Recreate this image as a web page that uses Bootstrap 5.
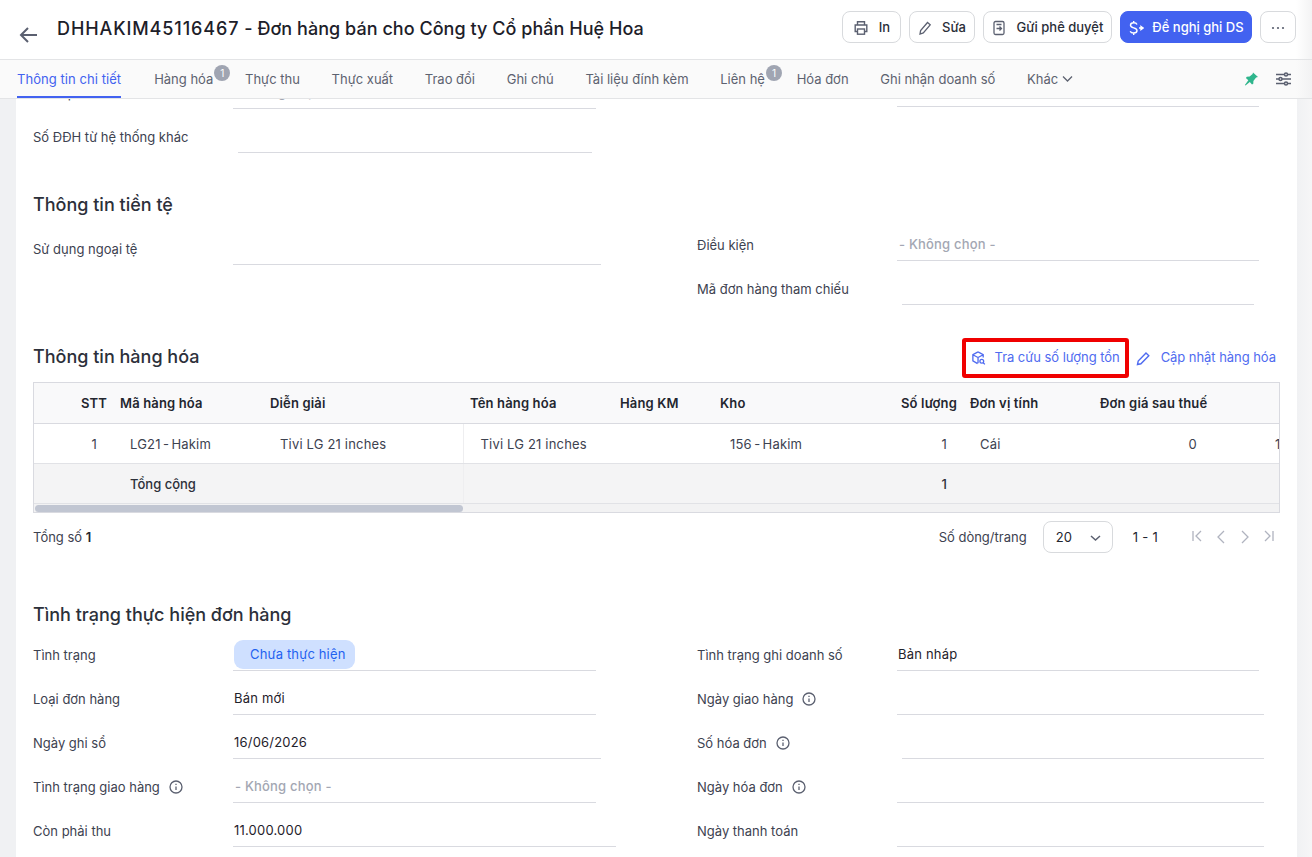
<!DOCTYPE html>
<html lang="en">
<head>
    <meta charset="UTF-8">
    <meta name="viewport" content="width=device-width, initial-scale=1.0">
    <title>Đơn hàng bán</title>
    <link href="https://cdn.jsdelivr.net/npm/bootstrap@5.3.0/dist/css/bootstrap.min.css" rel="stylesheet">
    <style>
        html, body { height: 100%; overflow: hidden; }
        body { font-family: Inter, "Noto Sans", sans-serif; font-size: 13px; color: #3d4250; background: #fff; }
        svg { display: block; flex: none; }

        .app-shell { width: 1312px; height: 857px; display: flex; flex-direction: column; }
        .page-head { height: 60px; background: linear-gradient(to right, #fff 1296px, #f3f3f4 1312px); border-bottom: 1px solid #e3e4e6; padding: 11px 16px 0 19px; flex: none; }
        .page-title { font-size: 18px; font-weight: 500; letter-spacing: .04px; color: #1d2029; margin: 1px 0 0 18px; white-space: pre; line-height: 34px; }
        .title-code { letter-spacing: .9px; }
        .back-btn { margin-top: 14px; }
        .head-btn { height: 32px; padding: 2px 0 0; border: 1px solid #d8dadd; border-radius: 8px; background: #fff; color: #2a2e38; font-size: 13px; font-weight: 500; display: flex; align-items: center; justify-content: center; gap: 10px; }
        .head-btn-primary { background: #4262f0; border-color: #4262f0; color: #fff; gap: 8px; }
        .btn-w59 { width: 59px; }
        .btn-w66 { width: 66px; }
        .btn-w129 { width: 129px; gap: 11px; }
        .btn-w132 { width: 132px; }
        .btn-w36 { width: 36px; }

        .tabs-bar { height: 39px; background: linear-gradient(to right, #fafafa 1296px, #f2f2f3 1312px); border-bottom: 1px solid #e3e4e6; flex: none; padding: 0 21px 0 17px; display: flex; align-items: stretch; position: relative; z-index: 2; }
        .tab-item { color: #5d6270; padding-top: 10px; margin-right: 31.7px; white-space: nowrap; position: relative; }
        .tab-active { color: #4262f0; border-bottom: 2px solid #4262f0; margin-right: 33px; letter-spacing: .06px; }
        .tab-count { position: absolute; top: 5px; right: -17px; width: 16px; height: 16px; border-radius: 50%; background: #a0a5b2; color: #fff; font-size: 10px; line-height: 16px; text-align: center; }
        .tab-tools { display: flex; gap: 17px; margin-left: auto; padding-top: 11px; }

        .page-body { flex: 1; min-height: 0; display: flex; background: linear-gradient(to right, #f0f1f3 1296px, #f6f6f7 1312px); padding: 0 15px 0 16px; }
        .content-card { background: #fff; flex: 1; overflow: hidden; padding: 0 16px 0 17px; }
        .clip-row { margin-top: -34px; }
        .clip-right { margin-top: -2px; }
        .field-row { height: 44px; display: flex; align-items: flex-start; }
        .field-label { width: 200px; flex: none; padding-top: 18px; line-height: 20px; display: flex; align-items: center; gap: 9px; white-space: nowrap; }
        .field-val { height: 44px; border-bottom: 1px solid #d9dae0; color: #1f222b; letter-spacing: .2px; line-height: 20px; padding-top: 17px; padding-left: 1px; flex: none; }
        .field-muted { color: #a3a7b3; font-weight: 500; padding-left: 2px; }
        .field-badge { padding-top: 13px; }
        .status-chip { display: inline-block; height: 29px; line-height: 29px; padding: 0 10px 0 16px; border-radius: 9px; background: #cfe0ff; color: #1f62f0; letter-spacing: .15px; }
        .w-363 { width: 363px; }
        .w-368 { width: 368px; }
        .w-383 { width: 383px; }
        .w-354 { width: 354px; margin-left: 5px; }
        .w-352 { width: 352px; margin-left: 5px; }
        .w-362 { width: 362px; }
        .w-362s { width: 362px; margin-left: 5px; }
        .w-367 { width: 367px; }
        .col-left { width: 664px; flex: none; }
        .col-right { flex: 1; }
        .col-left-low { padding-top: 4px; }

        .sec-title { font-size: 18px; font-weight: 500; color: #2c303a; line-height: 24px; margin: 0; }
        .sec-money { margin-top: 40px; }
        .sec-status { margin-top: 50px; }
        .sec-goods { margin-top: -2px; }
        .goods-head { margin-top: 33px; margin-bottom: 4px; height: 40px; }
        .goods-actions { display: flex; align-items: center; gap: 7px; }
        .goods-link { color: #4f6bf0; text-decoration: none; display: flex; align-items: center; gap: 9px; white-space: nowrap; letter-spacing: -.05px; }
        .goods-link-box { border: 4px solid #f00000; border-radius: 3px; height: 40px; padding: 0 5px; }
        .goods-link-edit { gap: 10px; margin-right: 5px; }

        .goods-wrap { width: 1247px; border: 1px solid #d9dae0; overflow: hidden; height: 131px; }
        .goods-table { table-layout: fixed; width: 1330px; border-collapse: collapse; margin: 0; }
        .gc-1 { width: 79px; }
        .gc-2 { width: 150px; }
        .gc-3 { width: 200px; }
        .gc-4 { width: 150px; }
        .gc-5 { width: 100px; }
        .gc-6 { width: 150px; }
        .gc-7 { width: 100px; }
        .gc-8 { width: 130px; }
        .gc-9 { width: 120px; }
        .gc-10 { width: 151px; }
        .goods-table th { height: 40px; padding: 1px 6px 0 7px; background: #f9f9fa; font-weight: 600; letter-spacing: .15px; color: #23262f; border-bottom: 1px solid #d9dae0; white-space: nowrap; }
        .goods-table td { height: 40px; padding: 4px 16px 0 17px; border-bottom: 1px solid #e1e2e6; color: #3d4250; letter-spacing: .18px; white-space: nowrap; }
        .goods-table .sum-row td { background: #f4f4f5; color: #2c303a; font-weight: 500; letter-spacing: 0; }
        .goods-table .cell-split { border-left: 1px solid #eeeef0; }
        .goods-table .cell-code { word-spacing: -1.5px; }
        .goods-table .cell-cut { padding-left: 62px; padding-right: 0; }
        .goods-track { height: 9px; background: #f2f2f3; padding-top: 1px; }
        .goods-thumb { width: 428px; height: 7px; margin-left: 1px; border-radius: 4px; background: #c1c6d2; }

        .pager-row { height: 32px; margin-top: 8px; }
        .pager-text { padding-top: 1px; }
        .pager-select { width: 70px; height: 32px; margin: 0 20px 0 16px; border: 1px solid #d8dadd; border-radius: 8px; padding: 1px 11px 0 12px; color: #23262f; display: flex; align-items: center; justify-content: space-between; letter-spacing: .3px; }
        .pager-range { color: #23262f; letter-spacing: .3px; margin-right: 27px; padding-top: 1px; }
        .pager-icons { display: flex; gap: 14px; margin-right: 7px; margin-left: 7px; }
        .total-strong { font-weight: 600; color: #23262f; }
    </style>
</head>
<body>
    <div class="app-shell">
        <!-- header -->
        <div class="page-head d-flex align-items-start">
            <svg class="back-btn" width="20" height="20" viewBox="0 0 20 20" fill="none" stroke="#5b6070" stroke-width="2"><path d="M18 10H2M9 3l-7 7 7 7"/></svg>
            <h1 class="page-title"><span class="title-code">DHHAKIM45116467</span> - Đơn hàng bán cho Công ty Cổ phần Huệ Hoa</h1>
            <div class="d-flex gap-2 ms-auto">
                <button class="head-btn btn-w59"><svg width="16" height="16" viewBox="0 0 16 16" fill="none" stroke="#5b6070" stroke-width="1.400"><path d="M4.500 5V1.800h7V5M4.500 11.500H2.200V5h11.600v6.500h-2.300"/><rect x="4.500" y="9" width="7" height="5.200"/></svg>In</button>
                <button class="head-btn btn-w66"><svg width="14" height="16" viewBox="0 0 14 16" fill="none" stroke="#5b6070" stroke-width="1.300"><path d="M2 14l.6-3.400L9.500 2.500l2.700 2.300-6.900 8.100z"/></svg>Sửa</button>
                <button class="head-btn btn-w129"><svg width="14" height="16" viewBox="0 0 14 16" fill="none" stroke="#5b6070" stroke-width="1.300"><rect x="2" y="1.500" width="10" height="13" rx="1.500"/><path d="M4.500 4.500h5M4.500 8.500h4.500M7.500 6.500l2 2-2 2"/></svg>Gửi phê duyệt</button>
                <button class="head-btn head-btn-primary btn-w132"><svg width="16" height="16" viewBox="0 0 16 16" fill="none" stroke="#fff" stroke-width="1.400"><path d="M9 4.500C8.500 3.200 7.200 2.800 5.700 2.800 3.800 2.800 2.500 3.800 2.500 5.300c0 3.300 6.500 1.800 6.500 5.200 0 1.500-1.300 2.500-3.300 2.500-1.600 0-3-.6-3.500-1.800M5.700 1v1.800M5.700 13v2"/><path d="M11 8h1.500M13 6.500l2 1.500-2 1.500z" fill="#fff"/></svg>Đề nghị ghi DS</button>
                <button class="head-btn btn-w36"><svg width="16" height="16" viewBox="0 0 16 16" fill="#5b6070"><circle cx="3" cy="8" r="1.100"/><circle cx="8" cy="8" r="1.100"/><circle cx="13" cy="8" r="1.100"/></svg></button>
            </div>
        </div>

        <!-- tabs -->
        <div class="tabs-bar">
            <div class="tab-item tab-active">Thông tin chi tiết</div>
            <div class="tab-item">Hàng hóa<span class="tab-count">1</span></div>
            <div class="tab-item">Thực thu</div>
            <div class="tab-item">Thực xuất</div>
            <div class="tab-item">Trao đổi</div>
            <div class="tab-item">Ghi chú</div>
            <div class="tab-item">Tài liệu đính kèm</div>
            <div class="tab-item">Liên hệ<span class="tab-count">1</span></div>
            <div class="tab-item">Hóa đơn</div>
            <div class="tab-item">Ghi nhận doanh số</div>
            <div class="tab-item d-flex gap-1 align-items-start">Khác<svg class="mt-1" width="11" height="10" viewBox="0 0 11 10" fill="none" stroke="#5d6270" stroke-width="1.300"><path d="M1 2.500l4.500 4.500L10 2.500"/></svg></div>
            <div class="tab-tools">
                <svg width="15" height="16" viewBox="0 0 15 16" fill="#2fb58c"><path d="M9 1.500l5 4.500-1.900.6-2.700 3.300-.1 2.800-1.300.8-2.200-2.600L1.500 14.500l-.6-.6 3.400-4.700-2.400-2.200.9-1.300 2.800-.1 3-2.600z"/></svg>
                <svg width="15" height="16" viewBox="0 0 15 16" fill="none" stroke="#5b6070" stroke-width="1.500"><path d="M0 3.500h15M0 8h15M0 12.500h15"/><circle cx="10" cy="3.500" r="1.500" fill="#fafafa"/><circle cx="4.500" cy="8" r="1.500" fill="#fafafa"/><circle cx="10" cy="12.500" r="1.500" fill="#fafafa"/></svg>
            </div>
        </div>

        <!-- form content, already scrolled down a little -->
        <div class="page-body">
            <div class="content-card">
                <div class="d-flex clip-row">
                    <div class="col-left"><div class="field-row"><div class="field-label">Kênh phân bổ</div><div class="field-val field-muted w-363">- Không chọn -</div></div></div>
                    <div class="col-right clip-right"><div class="field-row"><div class="field-label"></div><div class="field-val w-362"></div></div></div>
                </div>
                <div class="field-row"><div class="field-label">Số ĐĐH từ hệ thống khác</div><div class="field-val w-354"></div></div>

                <h2 class="sec-title sec-money">Thông tin tiền tệ</h2>
                <div class="d-flex">
                    <div class="col-left col-left-low"><div class="field-row"><div class="field-label">Sử dụng ngoại tệ</div><div class="field-val w-368"></div></div></div>
                    <div class="col-right">
                        <div class="field-row"><div class="field-label">Điều kiện</div><div class="field-val field-muted w-362">- Không chọn -</div></div>
                        <div class="field-row"><div class="field-label">Mã đơn hàng tham chiếu</div><div class="field-val w-352"></div></div>
                    </div>
                </div>

                <div class="d-flex align-items-center justify-content-between goods-head">
                    <h2 class="sec-title sec-goods">Thông tin hàng hóa</h2>
                    <div class="goods-actions">
                        <a class="goods-link goods-link-box"><svg width="15" height="16" viewBox="0 0 16 16" fill="none" stroke="#4f6bf0" stroke-width="1.400"><path d="M7.500 1.500l5.500 3v3M7.500 1.500L2 4.500v6.500l5 3M2 4.500l5.500 3v6M7.500 7.500L13 4.500"/><circle cx="11.500" cy="11.500" r="2"/><path d="M13 13l1.800 1.800"/></svg>Tra cứu số lượng tồn</a>
                        <a class="goods-link goods-link-edit"><svg width="15" height="15" viewBox="0 0 15 15" fill="none" stroke="#4f6bf0" stroke-width="1.400"><path d="M1.500 13.500l.7-3.400 7.800-8 2.800 2.700-7.900 8z"/></svg>Cập nhật hàng hóa</a>
                    </div>
                </div>

                <div class="goods-wrap">
                    <table class="goods-table">
                        <colgroup><col class="gc-1"><col class="gc-2"><col class="gc-3"><col class="gc-4"><col class="gc-5"><col class="gc-6"><col class="gc-7"><col class="gc-8"><col class="gc-9"><col class="gc-10"></colgroup>
                        <thead>
                            <tr><th class="text-end">STT</th><th>Mã hàng hóa</th><th>Diễn giải</th><th>Tên hàng hóa</th><th>Hàng KM</th><th>Kho</th><th class="text-end">Số lượng</th><th>Đơn vị tính</th><th>Đơn giá sau thuế</th><th></th></tr>
                        </thead>
                        <tbody>
                            <tr><td class="text-end">1</td><td class="cell-code">LG21 - Hakim</td><td>Tivi LG 21 inches</td><td class="cell-split">Tivi LG 21 inches</td><td></td><td class="cell-code">156 - Hakim</td><td class="text-end">1</td><td>Cái</td><td class="text-end">0</td><td class="cell-cut">11.000.000</td></tr>
                            <tr class="sum-row"><td></td><td>Tổng cộng</td><td></td><td class="cell-split"></td><td></td><td></td><td class="text-end">1</td><td></td><td></td><td></td></tr>
                        </tbody>
                    </table>
                    <div class="goods-track"><div class="goods-thumb"></div></div>
                </div>

                <div class="d-flex align-items-center pager-row">
                    <div class="pager-text">Tổng số <span class="total-strong">1</span></div>
                    <div class="ms-auto pager-text">Số dòng/trang</div>
                    <div class="pager-select">20<svg width="11" height="10" viewBox="0 0 11 10" fill="none" stroke="#5b6070" stroke-width="1.500"><path d="M1 3l4.500 4L10 3"/></svg></div>
                    <div class="pager-range">1 - 1</div>
                    <div class="pager-icons">
                        <svg width="10" height="12" viewBox="0 0 10 12" fill="none" stroke="#b0b3bf" stroke-width="1.300"><path d="M1 1v10M9 1L4 6l5 5"/></svg>
                        <svg width="10" height="14" viewBox="0 0 10 14" fill="none" stroke="#b0b3bf" stroke-width="1.300"><path d="M8 1L2 7l6 6"/></svg>
                        <svg width="10" height="14" viewBox="0 0 10 14" fill="none" stroke="#b0b3bf" stroke-width="1.300"><path d="M2 1l6 6-6 6"/></svg>
                        <svg width="10" height="12" viewBox="0 0 10 12" fill="none" stroke="#b0b3bf" stroke-width="1.300"><path d="M9 1v10M1 1l5 5-5 5"/></svg>
                    </div>
                </div>

                <h2 class="sec-title sec-status">Tình trạng thực hiện đơn hàng</h2>
                <div class="d-flex">
                    <div class="col-left">
                        <div class="field-row"><div class="field-label">Tình trạng</div><div class="field-val field-badge w-363"><span class="status-chip">Chưa thực hiện</span></div></div>
                        <div class="field-row"><div class="field-label">Loại đơn hàng</div><div class="field-val w-363">Bán mới</div></div>
                        <div class="field-row"><div class="field-label">Ngày ghi sổ</div><div class="field-val w-368">16/06/2026</div></div>
                        <div class="field-row"><div class="field-label">Tình trạng giao hàng <svg width="14" height="14" viewBox="0 0 14 14" fill="none" stroke="#5b6070" stroke-width="1.300"><circle cx="7" cy="7" r="6"/><path d="M7 6.500v3.500M7 3.800v1.200"/></svg></div><div class="field-val field-muted w-363">- Không chọn -</div></div>
                        <div class="field-row"><div class="field-label">Còn phải thu</div><div class="field-val w-383">11.000.000</div></div>
                    </div>
                    <div class="col-right">
                        <div class="field-row"><div class="field-label">Tình trạng ghi doanh số</div><div class="field-val w-362">Bản nháp</div></div>
                        <div class="field-row"><div class="field-label">Ngày giao hàng <svg width="14" height="14" viewBox="0 0 14 14" fill="none" stroke="#5b6070" stroke-width="1.300"><circle cx="7" cy="7" r="6"/><path d="M7 6.500v3.500M7 3.800v1.200"/></svg></div><div class="field-val w-367"></div></div>
                        <div class="field-row"><div class="field-label">Số hóa đơn <svg width="14" height="14" viewBox="0 0 14 14" fill="none" stroke="#5b6070" stroke-width="1.300"><circle cx="7" cy="7" r="6"/><path d="M7 6.500v3.500M7 3.800v1.200"/></svg></div><div class="field-val w-362s"></div></div>
                        <div class="field-row"><div class="field-label">Ngày hóa đơn <svg width="14" height="14" viewBox="0 0 14 14" fill="none" stroke="#5b6070" stroke-width="1.300"><circle cx="7" cy="7" r="6"/><path d="M7 6.500v3.500M7 3.800v1.200"/></svg></div><div class="field-val w-367"></div></div>
                        <div class="field-row"><div class="field-label">Ngày thanh toán</div><div class="field-val w-367"></div></div>
                    </div>
                </div>
            </div>
        </div>
    </div>
</body>
</html>
